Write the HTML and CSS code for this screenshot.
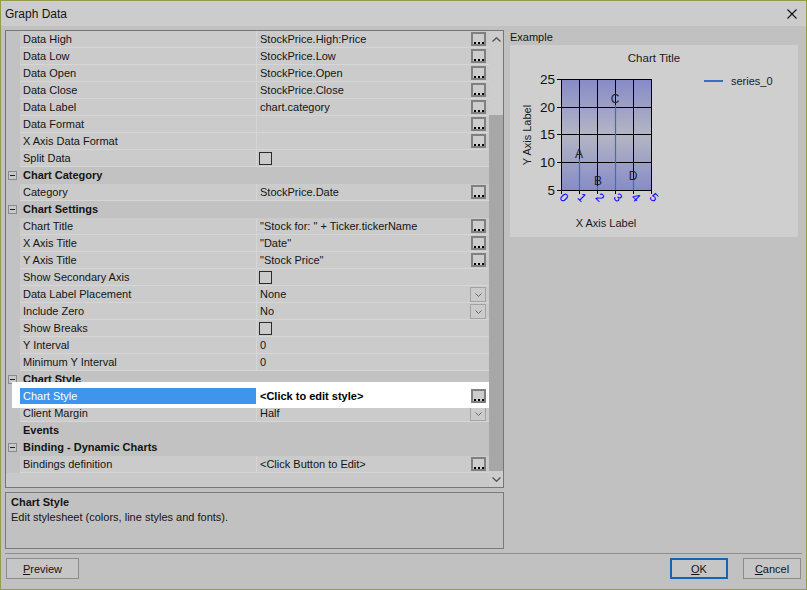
FILE: index.html
```html
<!DOCTYPE html>
<html>
<head>
<meta charset="utf-8">
<link rel="stylesheet" href="styles.css">
</head>
<body>
<div class="window">
  <div class="titlebar">
    <span class="title">Graph Data</span>
    <svg class="close" width="10" height="10" viewBox="0 0 10 10"><path d="M0.5 0.5 L9.5 9.5 M9.5 0.5 L0.5 9.5" stroke="#111" stroke-width="1.1" fill="none"/></svg>
  </div>
  <div class="body">
    <div class="main">
      <div class="left">
        <div class="grid">
          <div class="rows">
            <div class="row"><div class="gut"></div><div class="name">Data High</div><div class="val"><span class="txt">StockPrice.High:Price</span><span class="dots"></span></div></div>
            <div class="row"><div class="gut"></div><div class="name">Data Low</div><div class="val"><span class="txt">StockPrice.Low</span><span class="dots"></span></div></div>
            <div class="row"><div class="gut"></div><div class="name">Data Open</div><div class="val"><span class="txt">StockPrice.Open</span><span class="dots"></span></div></div>
            <div class="row"><div class="gut"></div><div class="name">Data Close</div><div class="val"><span class="txt">StockPrice.Close</span><span class="dots"></span></div></div>
            <div class="row"><div class="gut"></div><div class="name">Data Label</div><div class="val"><span class="txt">chart.category</span><span class="dots"></span></div></div>
            <div class="row"><div class="gut"></div><div class="name">Data Format</div><div class="val"><span class="txt"></span><span class="dots"></span></div></div>
            <div class="row"><div class="gut"></div><div class="name">X Axis Data Format</div><div class="val"><span class="txt"></span><span class="dots"></span></div></div>
            <div class="row"><div class="gut"></div><div class="name">Split Data</div><div class="val"><span class="check"></span></div></div>
            <div class="cat"><div class="gut"><span class="minus"></span></div><div class="cname">Chart Category</div></div>
            <div class="row"><div class="gut"></div><div class="name">Category</div><div class="val"><span class="txt">StockPrice.Date</span><span class="dots"></span></div></div>
            <div class="cat"><div class="gut"><span class="minus"></span></div><div class="cname">Chart Settings</div></div>
            <div class="row"><div class="gut"></div><div class="name">Chart Title</div><div class="val"><span class="txt">"Stock for: " + Ticker.tickerName</span><span class="dots"></span></div></div>
            <div class="row"><div class="gut"></div><div class="name">X Axis Title</div><div class="val"><span class="txt">"Date"</span><span class="dots"></span></div></div>
            <div class="row"><div class="gut"></div><div class="name">Y Axis Title</div><div class="val"><span class="txt">"Stock Price"</span><span class="dots"></span></div></div>
            <div class="row"><div class="gut"></div><div class="name">Show Secondary Axis</div><div class="val"><span class="check"></span></div></div>
            <div class="row"><div class="gut"></div><div class="name">Data Label Placement</div><div class="val"><span class="txt">None</span><span class="drop"><svg width="7" height="4" viewBox="0 0 7 4"><path d="M0.5 0.5 L3.5 3.5 L6.5 0.5" stroke="#6a6a6a" fill="none"/></svg></span></div></div>
            <div class="row"><div class="gut"></div><div class="name">Include Zero</div><div class="val"><span class="txt">No</span><span class="drop"><svg width="7" height="4" viewBox="0 0 7 4"><path d="M0.5 0.5 L3.5 3.5 L6.5 0.5" stroke="#6a6a6a" fill="none"/></svg></span></div></div>
            <div class="row"><div class="gut"></div><div class="name">Show Breaks</div><div class="val"><span class="check"></span></div></div>
            <div class="row"><div class="gut"></div><div class="name">Y Interval</div><div class="val"><span class="txt">0</span></div></div>
            <div class="row"><div class="gut"></div><div class="name">Minimum Y Interval</div><div class="val"><span class="txt">0</span></div></div>
            <div class="cat"><div class="gut"><span class="minus"></span></div><div class="cname">Chart Style</div></div>
            <div class="row sel"><div class="gut"></div><div class="name">Chart Style</div><div class="val"><span class="txt">&lt;Click to edit style&gt;</span><span class="dots"></span></div></div>
            <div class="row"><div class="gut"></div><div class="name">Client Margin</div><div class="val"><span class="txt">Half</span><span class="drop"><svg width="7" height="4" viewBox="0 0 7 4"><path d="M0.5 0.5 L3.5 3.5 L6.5 0.5" stroke="#6a6a6a" fill="none"/></svg></span></div></div>
            <div class="cat"><div class="gut"></div><div class="cname">Events</div></div>
            <div class="cat"><div class="gut"><span class="minus"></span></div><div class="cname">Binding - Dynamic Charts</div></div>
            <div class="row"><div class="gut"></div><div class="name">Bindings definition</div><div class="val"><span class="txt">&lt;Click Button to Edit&gt;</span><span class="dots"></span></div></div>
          </div>
          <div class="scroll">
            <div class="arrow"><svg width="9" height="5" viewBox="0 0 9 5"><path d="M0.5 4.5 L4.5 0.8 L8.5 4.5" stroke="#555" stroke-width="1.4" fill="none"/></svg></div>
            <div class="track"><div class="thumb"></div></div>
            <div class="arrow"><svg width="9" height="5" viewBox="0 0 9 5"><path d="M0.5 0.5 L4.5 4.2 L8.5 0.5" stroke="#555" stroke-width="1.4" fill="none"/></svg></div>
          </div>
        </div>
        <div class="desc">
          <div class="desc-title">Chart Style</div>
          <div class="desc-text">Edit stylesheet (colors, line styles and fonts).</div>
        </div>
      </div>
      <div class="right">
        <div class="example">Example</div>
        <div class="chart-panel">
          <svg width="288" height="192" viewBox="0 0 288 192" class="chart">
            <defs>
              <linearGradient id="pg" x1="0" y1="0" x2="0" y2="1">
                <stop offset="0" stop-color="#868bc8"/>
                <stop offset="0.5" stop-color="#b4b6c3"/>
                <stop offset="1" stop-color="#868bc8"/>
              </linearGradient>
            </defs>
            <text x="144" y="17" text-anchor="middle" class="ct">Chart Title</text>
            <line x1="194" y1="36" x2="213" y2="36" stroke="#3a6ec6" stroke-width="2"/>
            <text x="221" y="40" class="lg">series_0</text>
            <rect x="51.5" y="34.5" width="90" height="111" fill="url(#pg)"/>
            <g stroke="#000" stroke-width="1" fill="none">
              <path d="M69.5 34.5 V145.5 M87.5 34.5 V145.5 M105.5 34.5 V145.5 M123.5 34.5 V145.5"/>
              <path d="M51.5 62.5 H141.5 M51.5 89.5 H141.5 M51.5 117.5 H141.5"/>
              <rect x="51.5" y="34.5" width="90" height="111"/>
              <path d="M47 34.5 H51.5 M47 62.5 H51.5 M47 89.5 H51.5 M47 117.5 H51.5 M47 145.5 H51.5"/>
              <path d="M51.5 145.5 V149 M69.5 145.5 V149 M87.5 145.5 V149 M105.5 145.5 V149 M123.5 145.5 V149 M141.5 145.5 V149"/>
            </g>
            <g stroke="#3a6ec6" stroke-width="1.2">
              <path d="M69.5 114 V145 M105.5 60 V145 M123.5 134 V145 M87.5 141 V145"/>
            </g>
            <g class="dl">
              <text x="69" y="113" text-anchor="middle">A</text>
              <text x="88" y="140" text-anchor="middle">B</text>
              <text x="105" y="58" text-anchor="middle">C</text>
              <text x="123" y="135" text-anchor="middle">D</text>
            </g>
            <g class="yt" text-anchor="end">
              <text x="45" y="39">25</text>
              <text x="45" y="67">20</text>
              <text x="45" y="94">15</text>
              <text x="45" y="122">10</text>
              <text x="45" y="150">5</text>
            </g>
            <g class="xt" text-anchor="middle">
              <text transform="translate(54,152.5) rotate(45)" dy="0.35em">0</text>
              <text transform="translate(72,152.5) rotate(45)" dy="0.35em">1</text>
              <text transform="translate(90,152.5) rotate(45)" dy="0.35em">2</text>
              <text transform="translate(108,152.5) rotate(45)" dy="0.35em">3</text>
              <text transform="translate(126,152.5) rotate(45)" dy="0.35em">4</text>
              <text transform="translate(144,152.5) rotate(45)" dy="0.35em">5</text>
            </g>
            <text transform="translate(21,90) rotate(-90)" text-anchor="middle" class="al">Y Axis Label</text>
            <text x="96" y="182" text-anchor="middle" class="al">X Axis Label</text>
          </svg>
        </div>
      </div>
    </div>
    <div class="sep"></div>
    <div class="footer">
      <div class="btn preview"><u>P</u>review</div>
      <div class="btn-group">
        <div class="btn ok"><u>O</u>K</div>
        <div class="btn cancel"><u>C</u>ancel</div>
      </div>
    </div>
  </div>
</div>
</body>
</html>
```

FILE: styles.css
```css
* { box-sizing: border-box; margin: 0; padding: 0; }
html, body { margin: 0; width: 807px; height: 590px; overflow: hidden; }
body { font-family: "Liberation Sans", Arial, sans-serif; font-size: 11px; color: #141414; }

.window {
  width: 807px; height: 590px;
  border: 1px solid #949c47;
  background: #c1c1c1;
  display: flex; flex-direction: column;
}
.titlebar {
  height: 25px; flex: none;
  background: #cccccc;
  display: flex; align-items: center; justify-content: space-between;
  padding: 0 9px 0 4px;
}
.title { font-size: 12px; color: #141414; }

.body { flex: 1; display: flex; flex-direction: column; padding: 4px 4px 0 4px; }
.main { display: flex; gap: 6px; }
.left { width: 499px; display: flex; flex-direction: column; gap: 4px; flex: none; }

.grid {
  height: 458px;
  border: 1px solid #767676;
  background: #c9c9c9;
  display: flex;
}
.rows { width: 483px; display: flex; flex-direction: column; }

.row { height: 17px; display: flex; background: #c2c2c2; }
.gut { width: 14px; flex: none; display: flex; align-items: center; }
.name {
  width: 236px; flex: none;
  padding-left: 3px; line-height: 16px;
  background: #cbcbcb;
  border-bottom: 1px solid #d6d6d6;
  white-space: nowrap;
}
.val {
  flex: 1; display: flex; align-items: center;
  padding-left: 3px; padding-right: 3px;
  background: #cbcbcb;
  border-left: 1px solid #d6d6d6;
  border-bottom: 1px solid #d6d6d6;
  white-space: nowrap;
}
.txt { flex: 1; line-height: 16px; }
.dots {
  width: 15px; height: 14px; flex: none;
  border: 2px solid #808080;
  background:
    linear-gradient(#000, #000) 1px 8px / 2px 2px no-repeat,
    linear-gradient(#000, #000) 5px 8px / 2px 2px no-repeat,
    linear-gradient(#000, #000) 9px 8px / 2px 2px no-repeat,
    #cdcdcd;
}
.drop {
  width: 16px; height: 15px; flex: none;
  border: 1px solid #a3a3a3;
  background: #cbcbcb;
  display: flex; align-items: center; justify-content: center;
  padding-top: 2px;
}
.drop svg { display: block; }
.check {
  width: 13px; height: 13px; margin-left: -1px;
  border: 1px solid #2a2a2a;
  background: #cbcbcb;
}

.cat { height: 17px; display: flex; align-items: center; background: #c2c2c2; }
.cname { padding-left: 3px; font-weight: bold; line-height: 17px; }
.minus {
  width: 9px; height: 9px; margin-left: 2px;
  border: 1px solid #8a8a8a;
  background: linear-gradient(#222, #222) center / 5px 1px no-repeat, #c8c8c8;
}

.row.sel { position: relative; z-index: 1; }
.row.sel::before {
  content: ""; position: absolute;
  left: 6px; right: 0; top: -6px; bottom: -3px;
  background: #ffffff; z-index: -1;
}
.row.sel .gut { background: transparent; }
.row.sel .name { background: #3e95ec; color: #ffffff; border-bottom-color: #ffffff; }
.row.sel .val { background: #ffffff; border-color: #ffffff; font-weight: bold; color: #000; }

.scroll {
  width: 14px; flex: none;
  display: flex; flex-direction: column;
  background: #cdcdcd;
}
.arrow { height: 16px; display: flex; align-items: center; justify-content: center; }
.arrow svg { display: block; }
.track { flex: 1; display: flex; flex-direction: column; padding-top: 68px; }
.thumb { flex: 1; background: #a7a7a7; }

.desc {
  height: 57px;
  border: 1px solid #7a7a7a;
  padding: 2px 5px;
  line-height: 15px;
}
.desc-title { font-weight: bold; }

.right { width: 288px; flex: none; display: flex; flex-direction: column; }
.example { line-height: 15px; height: 15px; }
.chart-panel { width: 288px; height: 192px; background: #cfcfcf; }
.chart { display: block; font-family: "Liberation Sans", Arial, sans-serif; }
.ct { font-size: 11.5px; fill: #1a1a1a; }
.lg { font-size: 11px; fill: #1a1a1a; }
.al { font-size: 11px; fill: #1a1a1a; }
.yt { font-size: 13.5px; fill: #111; }
.xt { font-size: 12px; fill: #0000ff; }
.dl { font-size: 12px; fill: #222; }

.sep { height: 1px; background: #8f8f8f; margin-top: 4px; width: 797px; flex: none; }

.footer { margin-top: 4px; display: flex; justify-content: space-between; padding-left: 1px; padding-right: 1px; }
.btn-group { display: flex; gap: 15px; }
.btn {
  height: 21px;
  border: 1px solid #8c8c8c;
  background: #c6c6c6;
  display: flex; align-items: center; justify-content: center;
  color: #141414;
}
.preview { width: 73px; }
.ok { width: 58px; border: 2px solid #1565b5; }
.cancel { width: 58px; }
```
